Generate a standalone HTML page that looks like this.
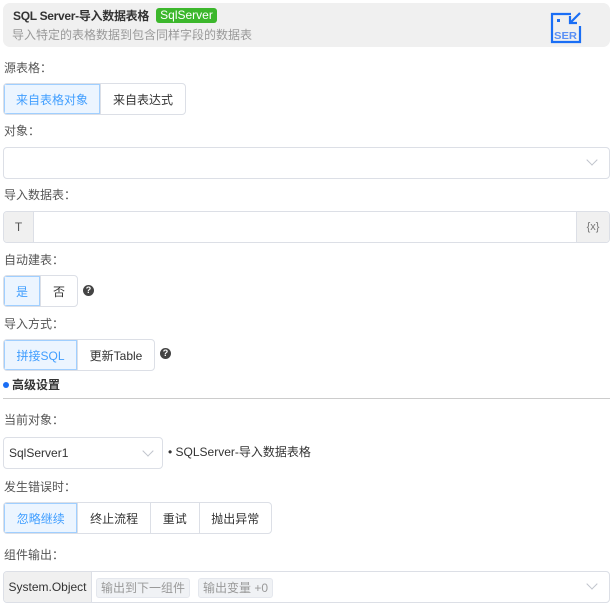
<!DOCTYPE html>
<html><head><meta charset="utf-8"><style>
*{box-sizing:border-box;margin:0;padding:0}
body{width:614px;height:606px;background:#fff;font-family:"Liberation Sans","Noto Sans CJK SC",sans-serif;font-size:12px;color:#333;position:relative;overflow:hidden}
.a{position:absolute}
.lbl{position:absolute;left:4px;font-size:12px;color:#555;line-height:14px}
.grp{position:absolute;display:flex;height:32px;border:1px solid #dcdfe6;border-radius:4px;overflow:hidden}
.grp div{display:flex;align-items:center;justify-content:center;border-left:1px solid #dcdfe6;font-size:12px;color:#333}
.grp div:first-child{border-left:none}
.grp div.on{background:#ecf5ff;color:#409eff;box-shadow:inset 0 0 0 1px #a0cfff}
.box{position:absolute;border:1px solid #dcdfe6;border-radius:4px;height:32px}
.chev{position:absolute;width:8px;height:8px;border-right:1px solid #c0c4cc;border-bottom:1px solid #c0c4cc;transform:rotate(45deg)}
.q{position:absolute;width:11px;height:11px;border-radius:50%;background:#444;color:#fff;font-size:9px;font-weight:bold;line-height:11px;text-align:center}
.tag{position:absolute;top:6px;height:20px;background:#f0f2f5;border:1px solid #e4e7ed;border-radius:3px;color:#999;font-size:12px;line-height:18px;padding:0 4px}
</style></head><body>
<div class="a" style="left:3px;top:3px;width:607px;height:44px;background:#f0f0f0;border-radius:7px"></div>
<div class="a" style="left:13px;top:9px;font-size:12px;font-weight:bold;color:#333;line-height:14px;letter-spacing:-0.3px">SQL Server-导入数据表格</div>
<div class="a" style="left:156px;top:8px;width:61px;height:15px;background:#3cb72c;border-radius:3px;color:#fff;font-size:12px;line-height:15px;text-align:center">SqlServer</div>
<div class="a" style="left:12px;top:28px;font-size:12px;color:#999;line-height:14px">导入特定的表格数据到包含同样字段的数据表</div>
<svg class="a" style="left:549px;top:11px" width="34" height="34" viewBox="0 0 34 34">
<path d="M22 3H3V31H31V15" fill="none" stroke="#1a6ef5" stroke-width="2.2"/>
<path d="M31 2L22 11M21 5V12H28" fill="none" stroke="#1a6ef5" stroke-width="2.2"/>
<rect x="8" y="8" width="3" height="3" fill="#1a6ef5"/>
<text x="5" y="28" font-family="Liberation Sans" font-weight="bold" font-size="10" fill="#5a8ff5" textLength="23" lengthAdjust="spacingAndGlyphs">SER</text>
</svg>

<div class="lbl" style="top:61px">源表格：</div>
<div class="grp" style="left:3px;top:83px;width:183px"><div class="on" style="width:97px">来自表格对象</div><div style="width:86px">来自表达式</div></div>

<div class="lbl" style="top:124px">对象：</div>
<div class="box" style="left:3px;top:147px;width:607px"></div>
<div class="chev" style="left:588px;top:156px"></div>

<div class="lbl" style="top:188px">导入数据表：</div>
<div class="box" style="left:3px;top:211px;width:607px;overflow:hidden">
<div class="a" style="left:0;top:0;width:30px;height:30px;background:#f0f0f0;border-right:1px solid #dcdfe6;text-align:center;line-height:30px;color:#555">T</div>
<div class="a" style="right:0;top:0;width:33px;height:30px;background:#f0f0f0;border-left:1px solid #dcdfe6;text-align:center;line-height:30px;color:#777;font-size:11px">{x}</div>
</div>

<div class="lbl" style="top:253px">自动建表：</div>
<div class="grp" style="left:3px;top:275px;width:75px"><div class="on" style="width:37px">是</div><div style="width:38px">否</div></div>
<div class="q" style="left:83px;top:285px">?</div>

<div class="lbl" style="top:317px">导入方式：</div>
<div class="grp" style="left:3px;top:339px;width:152px"><div class="on" style="width:74px">拼接SQL</div><div style="width:78px">更新Table</div></div>
<div class="q" style="left:160px;top:348px">?</div>

<div class="a" style="left:3px;top:382px;width:6px;height:6px;border-radius:50%;background:#1a6ef5"></div>
<div class="a" style="left:12px;top:378px;font-size:12px;font-weight:bold;color:#333;line-height:14px">高级设置</div>
<div class="a" style="left:3px;top:398px;width:607px;height:1px;background:#ccc"></div>

<div class="lbl" style="top:413px">当前对象：</div>
<div class="box" style="left:3px;top:437px;width:160px"></div>
<div class="a" style="left:9px;top:446px;font-size:12px;color:#333;line-height:14px">SqlServer1</div>
<div class="chev" style="left:144px;top:447px"></div>
<div class="a" style="left:168px;top:445px;font-size:12px;color:#333;line-height:14px">• SQLServer-导入数据表格</div>

<div class="lbl" style="top:480px">发生错误时：</div>
<div class="grp" style="left:3px;top:502px;width:269px"><div class="on" style="width:74px">忽略继续</div><div style="width:73px">终止流程</div><div style="width:49px">重试</div><div style="width:73px">抛出异常</div></div>

<div class="lbl" style="top:548px">组件输出：</div>
<div class="box" style="left:3px;top:571px;width:607px;overflow:hidden">
<div class="a" style="left:0;top:0;width:88px;height:30px;background:#f0f0f0;border-right:1px solid #dcdfe6;text-align:center;line-height:30px;color:#333">System.Object</div>
<div class="tag" style="left:92px">输出到下一组件</div>
<div class="tag" style="left:194px">输出变量 +0</div>
</div>
<div class="chev" style="left:588px;top:580px"></div>
</body></html>
